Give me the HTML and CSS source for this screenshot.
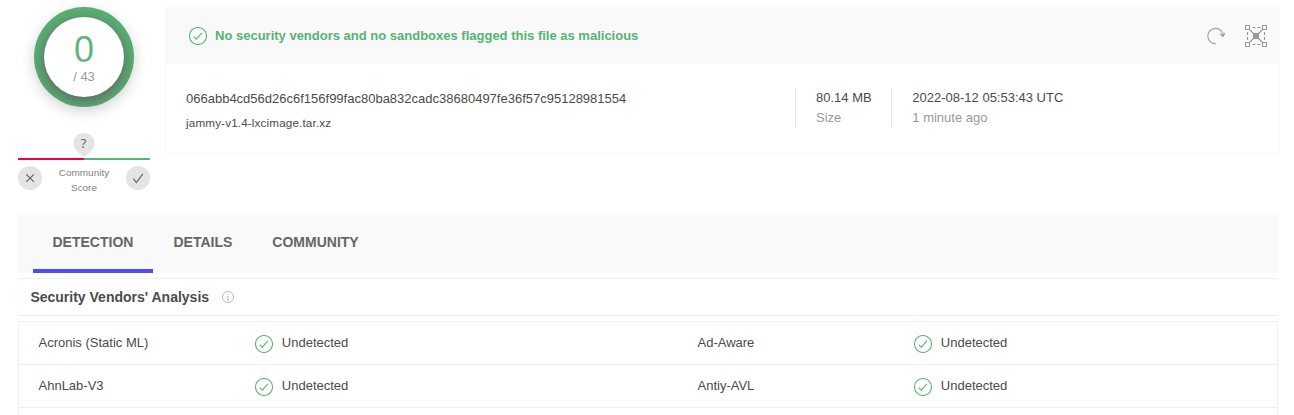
FILE: index.html
```html
<!DOCTYPE html>
<html lang="en">
<head>
<meta charset="utf-8">
<title>File report</title>
<link rel="stylesheet" href="styles.css">
</head>
<body>
<svg class="defs" aria-hidden="true">
  <symbol id="ok" viewBox="0 0 18 18"><circle cx="9" cy="9" r="8.5"/><path d="M4.700 9.700l2.600 2.500 5.600-6.400"/></symbol>
</svg>
<main class="report">
  <section class="summary">
    <aside class="score">
      <div class="ring"><div class="ring-inner"><div class="positives">0</div><div class="total">/ 43</div></div></div>
      <div class="community">
        <div class="pin">
          <svg class="pin-shape" viewBox="0 0 22 24"><path d="M11 0C17 0 21.500 4 21.500 10C21.500 16 16 20 11 24C6 20 .5 16 .5 10C.5 4 5 0 11 0z"/></svg>
          <span class="pin-mark">?</span>
        </div>
        <div class="bar"><span class="bad"></span><span class="good"></span></div>
        <div class="votes">
          <span class="vote"><svg viewBox="0 0 24 24"><path d="M8.300 8.300l7.600 7.600M15.900 8.300l-7.600 7.600"/></svg></span>
          <span class="vote-label">Community<br>Score</span>
          <span class="vote"><svg viewBox="0 0 24 24"><path d="M7.300 12.700l3 3.800 6.600-8.700"/></svg></span>
        </div>
      </div>
    </aside>
    <article class="card">
      <header class="card-head">
        <svg class="ok"><use href="#ok"/></svg>
        <h1 class="verdict">No security vendors and no sandboxes flagged this file as malicious</h1>
        <div class="actions">
          <svg class="reload" viewBox="0 0 20 20"><path d="M10 17.800a7.700 7.700 0 1 1 7.200-8M14 8l3.200 2.300 1.500-3.300"/></svg>
          <svg class="graph" viewBox="0 0 22 22">
            <path class="dash" d="M7.500 2.500h3M12.500 2.500h3M7.500 19.500h3M12.500 19.500h3M2.500 7v3M2.500 12v3M19.500 7v3M19.500 12v3"/>
            <path d="M4.500 4.500l13 13M17.500 4.500l-13 13M.5.5h4v4h-4zM17.500.5h4v4h-4zM.5 17.500h4v4h-4zM17.500 17.500h4v4h-4z"/>
            <path class="core" d="M8.500 8.500h5v5h-5z"/>
          </svg>
        </div>
      </header>
      <div class="card-body">
        <div class="names"><div class="hash">066abb4cd56d26c6f156f99fac80ba832cadc38680497fe36f57c95128981554</div><div class="filename">jammy-v1.4-lxcimage.tar.xz</div></div>
        <div class="fact size"><div>80.14 MB</div><div class="muted">Size</div></div>
        <div class="fact date"><div>2022-08-12 05:53:43 UTC</div><div class="muted">1 minute ago</div></div>
      </div>
    </article>
  </section>
  <nav class="tabs"><a class="tab active">DETECTION</a><a class="tab">DETAILS</a><a class="tab">COMMUNITY</a></nav>
  <h2 class="section-title">Security Vendors' Analysis
    <svg class="info" viewBox="0 0 12 12"><circle cx="6" cy="6" r="5.500"/><path d="M6 3v1M5 5.500h1v3.500M5 9h2"/></svg>
  </h2>
  <section class="engines">
    <div class="row">
      <span class="engine">Acronis (Static ML)</span><span class="result"><svg class="ok"><use href="#ok"/></svg>Undetected</span>
      <span class="engine">Ad-Aware</span><span class="result"><svg class="ok"><use href="#ok"/></svg>Undetected</span>
    </div>
    <div class="row">
      <span class="engine">AhnLab-V3</span><span class="result"><svg class="ok"><use href="#ok"/></svg>Undetected</span>
      <span class="engine">Antiy-AVL</span><span class="result"><svg class="ok"><use href="#ok"/></svg>Undetected</span>
    </div>
  </section>
</main>
</body>
</html>
```
FILE: styles.css
```css
* { box-sizing: border-box; }
body { margin: 0; background: #fff; color: #4b4b4b; font: 13px/20px "Liberation Sans", Arial, sans-serif; }
svg { display: block; fill: none; flex: none; }
.defs { width: 0; height: 0; position: absolute; }
.report { height: 415px; padding: 7px 16px 0 18px; display: flex; flex-direction: column; }
.summary { display: flex; gap: 15px; height: 208px; flex: none; }
.score { width: 132px; flex: none; }
.ring { width: 100px; height: 100px; margin: 0 auto; padding: 10px; border-radius: 50%; background: #57b374; box-shadow: 0 4px 14px rgba(0,0,0,.18); }
.ring-inner { height: 80px; border-radius: 50%; background: #fff; text-align: center; padding-top: 12px; box-shadow: 0 4px 16px rgba(98,80,92,.9); clip-path: circle(50px at 50% 50%); }
.positives { color: #57b374; font-size: 36px; line-height: 42px; -webkit-text-stroke: .2px #fff; }
.total { color: #999; line-height: 16px; margin-top: -2px; }
.community { margin-top: 26px; }
.pin { position: relative; width: 22px; height: 24px; margin: 0 auto; left: -.5px; }
.pin-shape { width: 22px; height: 24px; fill: #e4e4e4; }
.pin-mark { position: absolute; inset: 0; text-align: center; font: 13px/20px "Open Sans", sans-serif; color: #606060; }
.bar { display: flex; height: 2px; margin-top: 1px; }
.bar span { flex: 1; }
.bad { background: #e6005a; }
.good { background: #57b374; }
.votes { display: flex; justify-content: space-between; margin-top: 6px; }
.vote { width: 24px; height: 24px; border-radius: 50%; background: #e4e4e4; }
.vote svg { stroke: #606060; stroke-width: 1.1; }
.vote-label { font-size: 9.95px; line-height: 15px; margin-top: -1px; text-align: center; color: #808080; }
.card { flex: 1; height: 146px; margin-right: -2px; border: 1px solid #f8f8f8; }
.card-head { height: 56px; background: #f9f9f9; display: flex; align-items: center; padding: 0 12px 0 23px; }
.ok { width: 18px; height: 18px; stroke: #57b374; stroke-width: 1.05; }
.verdict { margin: 0 0 0 8px; font-size: 13px; line-height: 20px; color: #57b374; }
.actions { display: flex; align-items: center; gap: 19px; margin-left: auto; }
.actions svg { stroke: #999; stroke-width: 1.1; }
.reload { width: 20px; height: 20px; }
.graph { width: 22px; height: 22px; }
.core { fill: #999; }
.card-body { display: flex; align-items: flex-start; padding: 24px 20px 0; }
.names { width: 609px; padding-top: 1px; }
.filename { font-size: 11.7px; letter-spacing: .14px; margin-top: 4px; }
.fact { border-left: 1px solid #e4e4e4; padding-left: 20px; height: 39px; white-space: nowrap; }
.size { width: 96px; }
.date { padding-left: 20.3px; }
.muted { color: #999; }
.tabs { display: flex; height: 58px; flex: none; background: #f9f9f9; padding-left: 15px; }
.tab { height: 58px; padding: 17px 20px 0; font-size: 14px; font-weight: 700; color: #666; border-bottom: 4px solid transparent; }
.active { width: 120px; padding: 17px 0 0 19.5px; margin-right: .5px; border-color: #4a4dff; }
.section-title { height: 38px; flex: none; margin: 5px 0; padding-left: 12.4px; display: flex; align-items: center; gap: 12.6px; border: solid #f0f0f0; border-width: 1px 0; font-size: 14px; }
.info { width: 12px; height: 12px; stroke: #aaa; stroke-width: .8; }
.engines { flex: 1; border: 1px solid #f0f0f0; border-bottom: 0; }
.row { height: 43px; display: grid; grid-template-columns: 216.5px 442.5px 216.5px 1fr; padding: 11px 0 0 19.5px; border-bottom: 1px solid #f0f0f0; }
.result { display: flex; gap: 8.8px; }
.result .ok { margin-top: 2px; }
```
